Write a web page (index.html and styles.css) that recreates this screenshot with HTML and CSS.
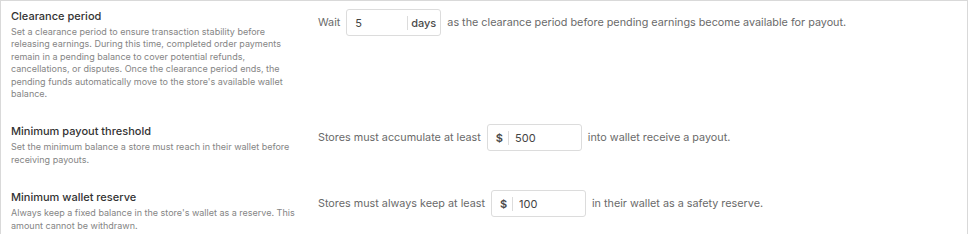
FILE: index.html
```html
<!DOCTYPE html>
<html lang="en">
<head>
    <title>Payout settings</title>
    <link rel="stylesheet" href="styles.css">
</head>
<body>
    <section class="settings-card">
        <!-- CLEARANCE -->
        <div class="setting-row">
            <div class="setting-info">
                <h3 class="setting-title">Clearance period</h3>
                <p class="setting-desc">Set a clearance period to ensure transaction stability before releasing earnings. During this time, completed order payments remain in a pending balance to cover potential refunds, cancellations, or disputes. Once the clearance period ends, the pending funds automatically move to the store's available wallet balance.</p>
            </div>
            <div class="setting-control">
                <span class="control-text">Wait</span>
                <div class="input-group">
                    <input type="text" class="input-field short" value="5">
                    <span class="addon addon-right">days</span>
                </div>
                <span class="control-text">as the clearance period before pending earnings become available for payout.</span>
            </div>
        </div>
        <!-- THRESHOLD -->
        <div class="setting-row">
            <div class="setting-info">
                <h3 class="setting-title">Minimum payout threshold</h3>
                <p class="setting-desc">Set the minimum balance a store must reach in their wallet before receiving payouts.</p>
            </div>
            <div class="setting-control">
                <span class="control-text">Stores must accumulate at least</span>
                <div class="input-group">
                    <span class="addon addon-left">$</span>
                    <input type="text" class="input-field" value="500">
                </div>
                <span class="control-text">into wallet receive a payout.</span>
            </div>
        </div>
        <!-- RESERVE -->
        <div class="setting-row">
            <div class="setting-info">
                <h3 class="setting-title">Minimum wallet reserve</h3>
                <p class="setting-desc">Always keep a fixed balance in the store's wallet as a reserve. This amount cannot be withdrawn.</p>
            </div>
            <div class="setting-control">
                <span class="control-text">Stores must always keep at least</span>
                <div class="input-group">
                    <span class="addon addon-left">$</span>
                    <input type="text" class="input-field" value="100">
                </div>
                <span class="control-text">in their wallet as a safety reserve.</span>
            </div>
        </div>
    </section>
</body>
</html>
```

FILE: styles.css
```css
html, body {
    margin: 0;
    padding: 0;
    background: #ffffff;
    font-family: Inter, "Noto Sans", sans-serif;
}
.settings-card {
    width: 968px;
    height: 234px;
    box-sizing: border-box;
    border: 1px solid #d9d9d9;
    border-bottom: none;
    padding: 8px 0 0 10px;
    display: flex;
    flex-direction: column;
    gap: 24px;
    overflow: hidden;
}
.setting-row {
    display: flex;
    align-items: flex-start;
}
.setting-info {
    width: 290px;
    flex-shrink: 0;
    margin-right: 17px;
}
.setting-title {
    margin: 0 0 3px 0;
    font-size: 11px;
    font-weight: 500;
    color: #333333;
    line-height: 14px;
}
.setting-desc {
    margin: 0;
    font-size: 9px;
    line-height: 12.4px;
    color: #858585;
}
.setting-control {
    display: flex;
    align-items: center;
    gap: 6px;
}
.control-text {
    font-size: 10.8px;
    color: #6a6a6a;
}
.input-group {
    display: flex;
    align-items: center;
    width: 95px;
    height: 27px;
    border: 1px solid #dcdcdc;
    border-radius: 3px;
    padding: 0 4px 0 8px;
    box-sizing: border-box;
}
.input-field {
    flex: 1;
    min-width: 0;
    border: none;
    outline: none;
    padding: 0;
    font-family: inherit;
    font-size: 11px;
    color: #444444;
    background: transparent;
}
.addon {
    font-size: 11px;
    color: #4a4a4a;
    font-weight: 500;
}
.addon-left {
    font-weight: 600;
}
.addon-right {
    border-left: 1px solid #dcdcdc;
    padding-left: 3px;
}
.addon-left {
    border-right: 1px solid #dcdcdc;
    padding-right: 5px;
    margin-right: 6px;
}
```
